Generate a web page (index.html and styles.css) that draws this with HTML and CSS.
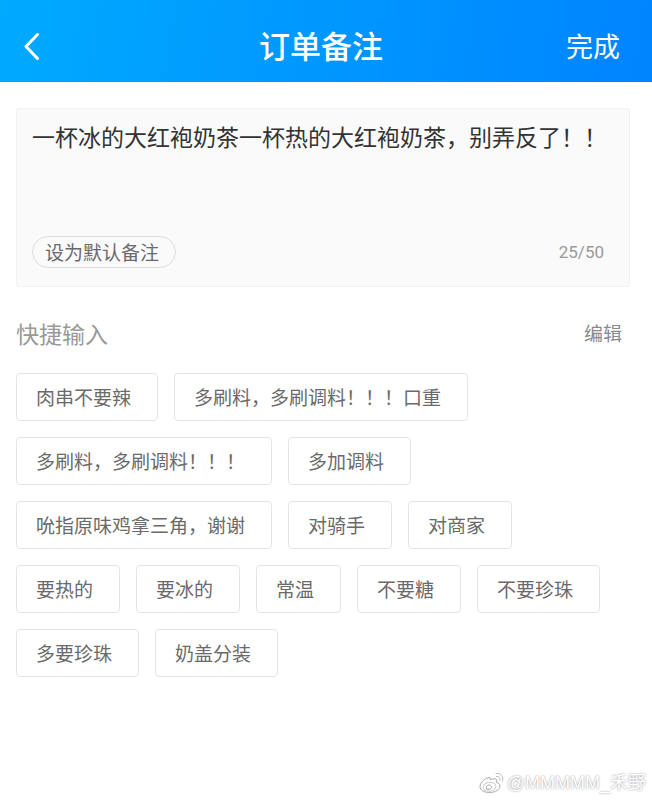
FILE: index.html
```
<!DOCTYPE html>
<html lang="zh-CN">
  <head>
    <meta charset="UTF-8">
    <meta name="viewport" content="width=device-width, initial-scale=1">
    <title>订单备注</title>
    <link rel="stylesheet" href="styles.css">
  </head>
  <body>
    <header class="topbar">
      <button type="button" class="back" aria-label="返回">
        <svg width="18" height="28" viewBox="0 0 18 28" fill="none" stroke="#fff" stroke-width="3" stroke-linecap="round" stroke-linejoin="round">
          <path d="M15.5 2.5 4 14.500l11.500 12"/>
        </svg>
      </button>
      <h1>订单备注</h1>
      <button type="button" class="done">完成</button>
    </header>

    <main>
      <div class="note">
        <textarea class="note-text" maxlength="50" aria-label="订单备注">一杯冰的大红袍奶茶一杯热的大红袍奶茶，别弄反了！！</textarea>
        <div class="note-foot">
          <button type="button" class="set-default">设为默认备注</button>
          <span class="count">25/50</span>
        </div>
      </div>

      <div class="quick-head">
        <h2>快捷输入</h2>
        <button type="button" class="edit">编辑</button>
      </div>
      <div class="tags">
        <button type="button" class="tag">肉串不要辣</button>
        <button type="button" class="tag">多刷料，多刷调料！！！口重</button>
        <button type="button" class="tag">多刷料，多刷调料！！！</button>
        <button type="button" class="tag">多加调料</button>
        <button type="button" class="tag">吮指原味鸡拿三角，谢谢</button>
        <button type="button" class="tag">对骑手</button>
        <button type="button" class="tag">对商家</button>
        <button type="button" class="tag">要热的</button>
        <button type="button" class="tag">要冰的</button>
        <button type="button" class="tag">常温</button>
        <button type="button" class="tag">不要糖</button>
        <button type="button" class="tag">不要珍珠</button>
        <button type="button" class="tag">多要珍珠</button>
        <button type="button" class="tag">奶盖分装</button>
      </div>
    </main>

    <footer class="watermark">
      <svg width="26" height="22" viewBox="0 0 26 22" fill="none" stroke="#aaa" stroke-linecap="round">
        <path fill="#fff" d="M10.5 5.5C6 6 1 10.500 1 14.500c0 4 4.500 6 9.500 6 6 0 10.500-3 10.500-6.500 0-2-1.500-3-3.500-3.500.8-2 .3-3.500-1.500-3.700-1.500-.2-3 .3-4.500.9.500-1.500 0-2.400-1.500-2.200z"/>
        <ellipse cx="10.500" cy="14.800" rx="6.500" ry="4.500" stroke="#ccc" transform="rotate(-8 10.500 14.800)"/>
        <path d="M7.500 17c-1-2 .5-4 2.500-4 2.200 0 3.200 1.800 2 3.400-1.200 1.500-3.500 1.900-4.500.6zM9 16.200h.3"/>
        <path stroke="#bbb" d="M17 1.500c4.500-1 8 3 6.500 7.500M17.500 4.500c2.500-.4 4 1.500 3.300 3.800"/>
      </svg>
      <span>@MMMMM_禾野</span>
    </footer>
  </body>
</html>
```
FILE: styles.css
```
*{
  box-sizing: border-box;
}
body{
  display: flex;
  flex-direction: column;
  min-height: 100vh;
  margin: 0;
  background: #fff;
  color: #333;
  font-family: "Noto Sans CJK SC", sans-serif;
}
h1, h2{
  margin: 0;
}
button{
  padding: 0;
  border: 0;
  background: none;
  color: inherit;
  font-family: inherit;
  cursor: pointer;
}

.topbar{
  display: grid;
  grid-template-columns: 1fr auto 1fr;
  align-items: center;
  padding: 11px 32px 1px 22px;
  height: 82px;
  background: linear-gradient(100deg, #00aaff, #0084ff);
  color: #fff;
}
.topbar h1{
  padding-bottom: 2px;
  font-size: 31px;
  line-height: 44px;
  font-weight: 500;
}
.back{
  display: flex;
  justify-self: start;
}
.done{
  justify-self: end;
  font-size: 27px;
  line-height: 40px;
}

main{
  padding: 26px 22px 0 16px;
}
.note{
  padding: 10px 16px 18px 15px;
  background: #fafafa;
  border: 1px solid #f1f1f1;
  border-radius: 3px;
}
.note-text{
  display: block;
  width: 100%;
  height: 117px;
  padding: 0;
  border: 0;
  outline: 0;
  resize: none;
  background: none;
  color: #333;
  font-family: inherit;
  font-size: 23px;
  line-height: 34px;
}
.note-foot{
  display: flex;
  align-items: center;
  justify-content: space-between;
  padding-right: 9px;
}
.set-default{
  padding: 0 16px 0 12px;
  border: 1px solid #ddd;
  border-radius: 16px;
  color: #6a6a6a;
  font-size: 19px;
  line-height: 30px;
}
.count{
  color: #999;
  font-family: Roboto, sans-serif;
  font-size: 17px;
}

.quick-head{
  display: flex;
  align-items: center;
  justify-content: space-between;
  padding: 29px 8px 23px 0;
  color: #999;
}
.quick-head h2{
  font-size: 23px;
  line-height: 34px;
  font-weight: 400;
}
.edit{
  color: #8a8a8a;
  font-size: 19px;
  line-height: 30px;
}
.tags{
  display: flex;
  flex-wrap: wrap;
  gap: 16px;
}
.tag{
  padding: 0 26px 0 19px;
  border: 1px solid #e4e4e4;
  border-radius: 4px;
  color: #6a6a6a;
  font-size: 19px;
  line-height: 46px;
}

.watermark{
  display: flex;
  align-items: center;
  justify-content: flex-end;
  gap: 2px;
  margin-top: auto;
  padding: 0 6px 4px;
  color: #fff;
  font-family: "Liberation Sans", "Noto Sans CJK SC", sans-serif;
  font-size: 18px;
  line-height: 26px;
  text-shadow: 0 0 2px #888;
}
```
